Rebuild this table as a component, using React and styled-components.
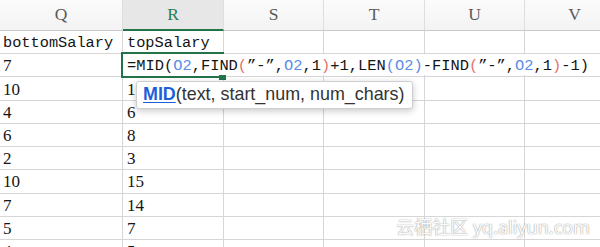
import React from 'react';
import styled, { createGlobalStyle } from 'styled-components';

const GlobalStyle = createGlobalStyle`
  html, body { margin: 0; padding: 0; background: #fff; }
  body { overflow: hidden; }
`;

const COLS = [
  { id: 'Q', w: 123 },
  { id: 'R', w: 101 },
  { id: 'S', w: 100 },
  { id: 'T', w: 101 },
  { id: 'U', w: 100 },
  { id: 'V', w: 100 },
];

const ROWS = [
  ['bottomSalary', 'topSalary'],
  ['7', null],
  ['10', '15'],
  ['4', '6'],
  ['6', '8'],
  ['2', '3'],
  ['10', '15'],
  ['7', '14'],
  ['5', '7'],
  ['4', '5'],
];

const GREEN = '#22734a';
const BLUE = '#5b8de4';
const RED = '#e5726a';
const INK = '#151515';

const FORMULA = [
  ['=MID(', INK],
  ['O2', BLUE],
  [',FIND', INK],
  ['(', RED],
  ['”-”,', INK],
  ['O2', BLUE],
  [',1', INK],
  [')', RED],
  ['+1,LEN', INK],
  ['(', BLUE],
  ['O2', BLUE],
  [')', BLUE],
  ['-FIND', INK],
  ['(', RED],
  ['”-”,', INK],
  ['O2', BLUE],
  [',1', INK],
  [')', RED],
  ['-1)', INK],
];

const Sheet = styled.div`
  position: relative;
  width: 600px;
  height: 247px;
  overflow: hidden;
  background: #fff;
`;

const HeaderRow = styled.div`
  display: flex;
  height: 31px;
`;

const HeaderCell = styled.div`
  flex: none;
  box-sizing: border-box;
  width: ${(p) => p.$w}px;
  height: 31px;
  display: flex;
  align-items: center;
  justify-content: center;
  padding-bottom: 1px;
  font-family: 'Liberation Serif', 'DejaVu Serif', serif;
  font-size: 17.5px;
  color: ${(p) => (p.$active ? '#2d7d50' : '#5a5a5a')};
  background: ${(p) => (p.$active ? '#e7e7e7' : 'linear-gradient(#fbfbfb, #f3f3f3)')};
  border-right: 1px solid #dedede;
  border-bottom: ${(p) => (p.$active ? `2px solid ${GREEN}` : '1px solid #c9c9c9')};
`;

const Row = styled.div`
  display: flex;
  height: 23.22px;
`;

const Cell = styled.div`
  flex: none;
  position: relative;
  box-sizing: border-box;
  width: ${(p) => p.$w}px;
  height: 100%;
  display: flex;
  align-items: center;
  padding: 2px 3px 0 ${(p) => (p.$col === 0 ? 3 : 4)}px;
  border-right: 1px solid #d6d6d6;
  border-bottom: 1px solid #d6d6d6;
  white-space: nowrap;
  font-family: ${(p) => (p.$mono ? "'Liberation Mono', 'DejaVu Sans Mono', monospace" : "'Liberation Serif', 'DejaVu Serif', serif")};
  font-size: ${(p) => (p.$mono ? '15.3px' : '17px')};
  color: ${INK};
`;

const SelectionFrame = styled.div`
  position: absolute;
  inset: -2px -1px -2px -2px;
  border: 2px solid ${GREEN};
  z-index: 1;
  pointer-events: none;
`;

const Editor = styled.div`
  position: absolute;
  inset: 0 auto 1px 0;
  width: 477px;
  box-sizing: border-box;
  display: flex;
  align-items: center;
  padding: 2px 0 0 4px;
  background: #fff;
  z-index: 2;
  white-space: nowrap;
  font-family: 'Liberation Mono', 'DejaVu Sans Mono', monospace;
  font-size: 15.4px;
`;

const Token = styled.span`
  color: ${(p) => p.$c};
`;

const FillHandle = styled.div`
  position: absolute;
  right: -3px;
  bottom: -4px;
  width: 7px;
  height: 5px;
  background: ${GREEN};
  z-index: 3;
`;

const Tooltip = styled.div`
  position: absolute;
  left: 136px;
  top: 81px;
  width: 277px;
  height: 28px;
  box-sizing: border-box;
  display: flex;
  align-items: center;
  padding: 0 0 1px 6px;
  background: #fff;
  border: 1px solid #cfcfcf;
  border-radius: 3px;
  box-shadow: 0 2px 7px rgba(0, 0, 0, 0.22);
  z-index: 5;
  white-space: nowrap;
  font-family: 'Liberation Sans', Arial, sans-serif;
  font-size: 17.9px;
  color: #333;
`;

const FuncName = styled.span`
  font-weight: bold;
  color: #1d5fd8;
  text-decoration: underline;
  text-underline-offset: 2px;
`;

const Watermark = styled.div`
  position: absolute;
  right: 10px;
  bottom: 8px;
  z-index: 6;
  white-space: nowrap;
  font-family: 'Noto Sans', 'Noto Sans CJK SC', sans-serif;
  font-size: 18px;
  color: rgba(255, 255, 255, 0.97);
  text-shadow: 0 0 1px rgba(0, 0, 0, 0.4), 0 0 2px rgba(0, 0, 0, 0.18);
`;

export default function App() {
  return (
    <>
      <GlobalStyle />
      <Sheet>
        <HeaderRow>
          {COLS.map((c) => (
            <HeaderCell key={c.id} $w={c.w} $active={c.id === 'R'}>
              {c.id}
            </HeaderCell>
          ))}
        </HeaderRow>
        {ROWS.map((r, ri) => (
          <Row key={ri}>
            {COLS.map((c, ci) => {
              const val = ci < 2 ? r[ci] : '';
              const editing = ri === 1 && ci === 1;
              return (
                <Cell key={c.id} $w={c.w} $col={ci} $mono={ri === 0}>
                  {editing ? (
                    <>
                      <SelectionFrame />
                      <Editor>
                        {FORMULA.map(([t, col], i) => (
                          <Token key={i} $c={col}>
                            {t}
                          </Token>
                        ))}
                      </Editor>
                      <FillHandle />
                    </>
                  ) : (
                    val
                  )}
                </Cell>
              );
            })}
          </Row>
        ))}
        <Tooltip>
          <FuncName>MID</FuncName>(text, start_num, num_chars)
        </Tooltip>
        <Watermark>云栖社区 yq.aliyun.com</Watermark>
      </Sheet>
    </>
  );
}
